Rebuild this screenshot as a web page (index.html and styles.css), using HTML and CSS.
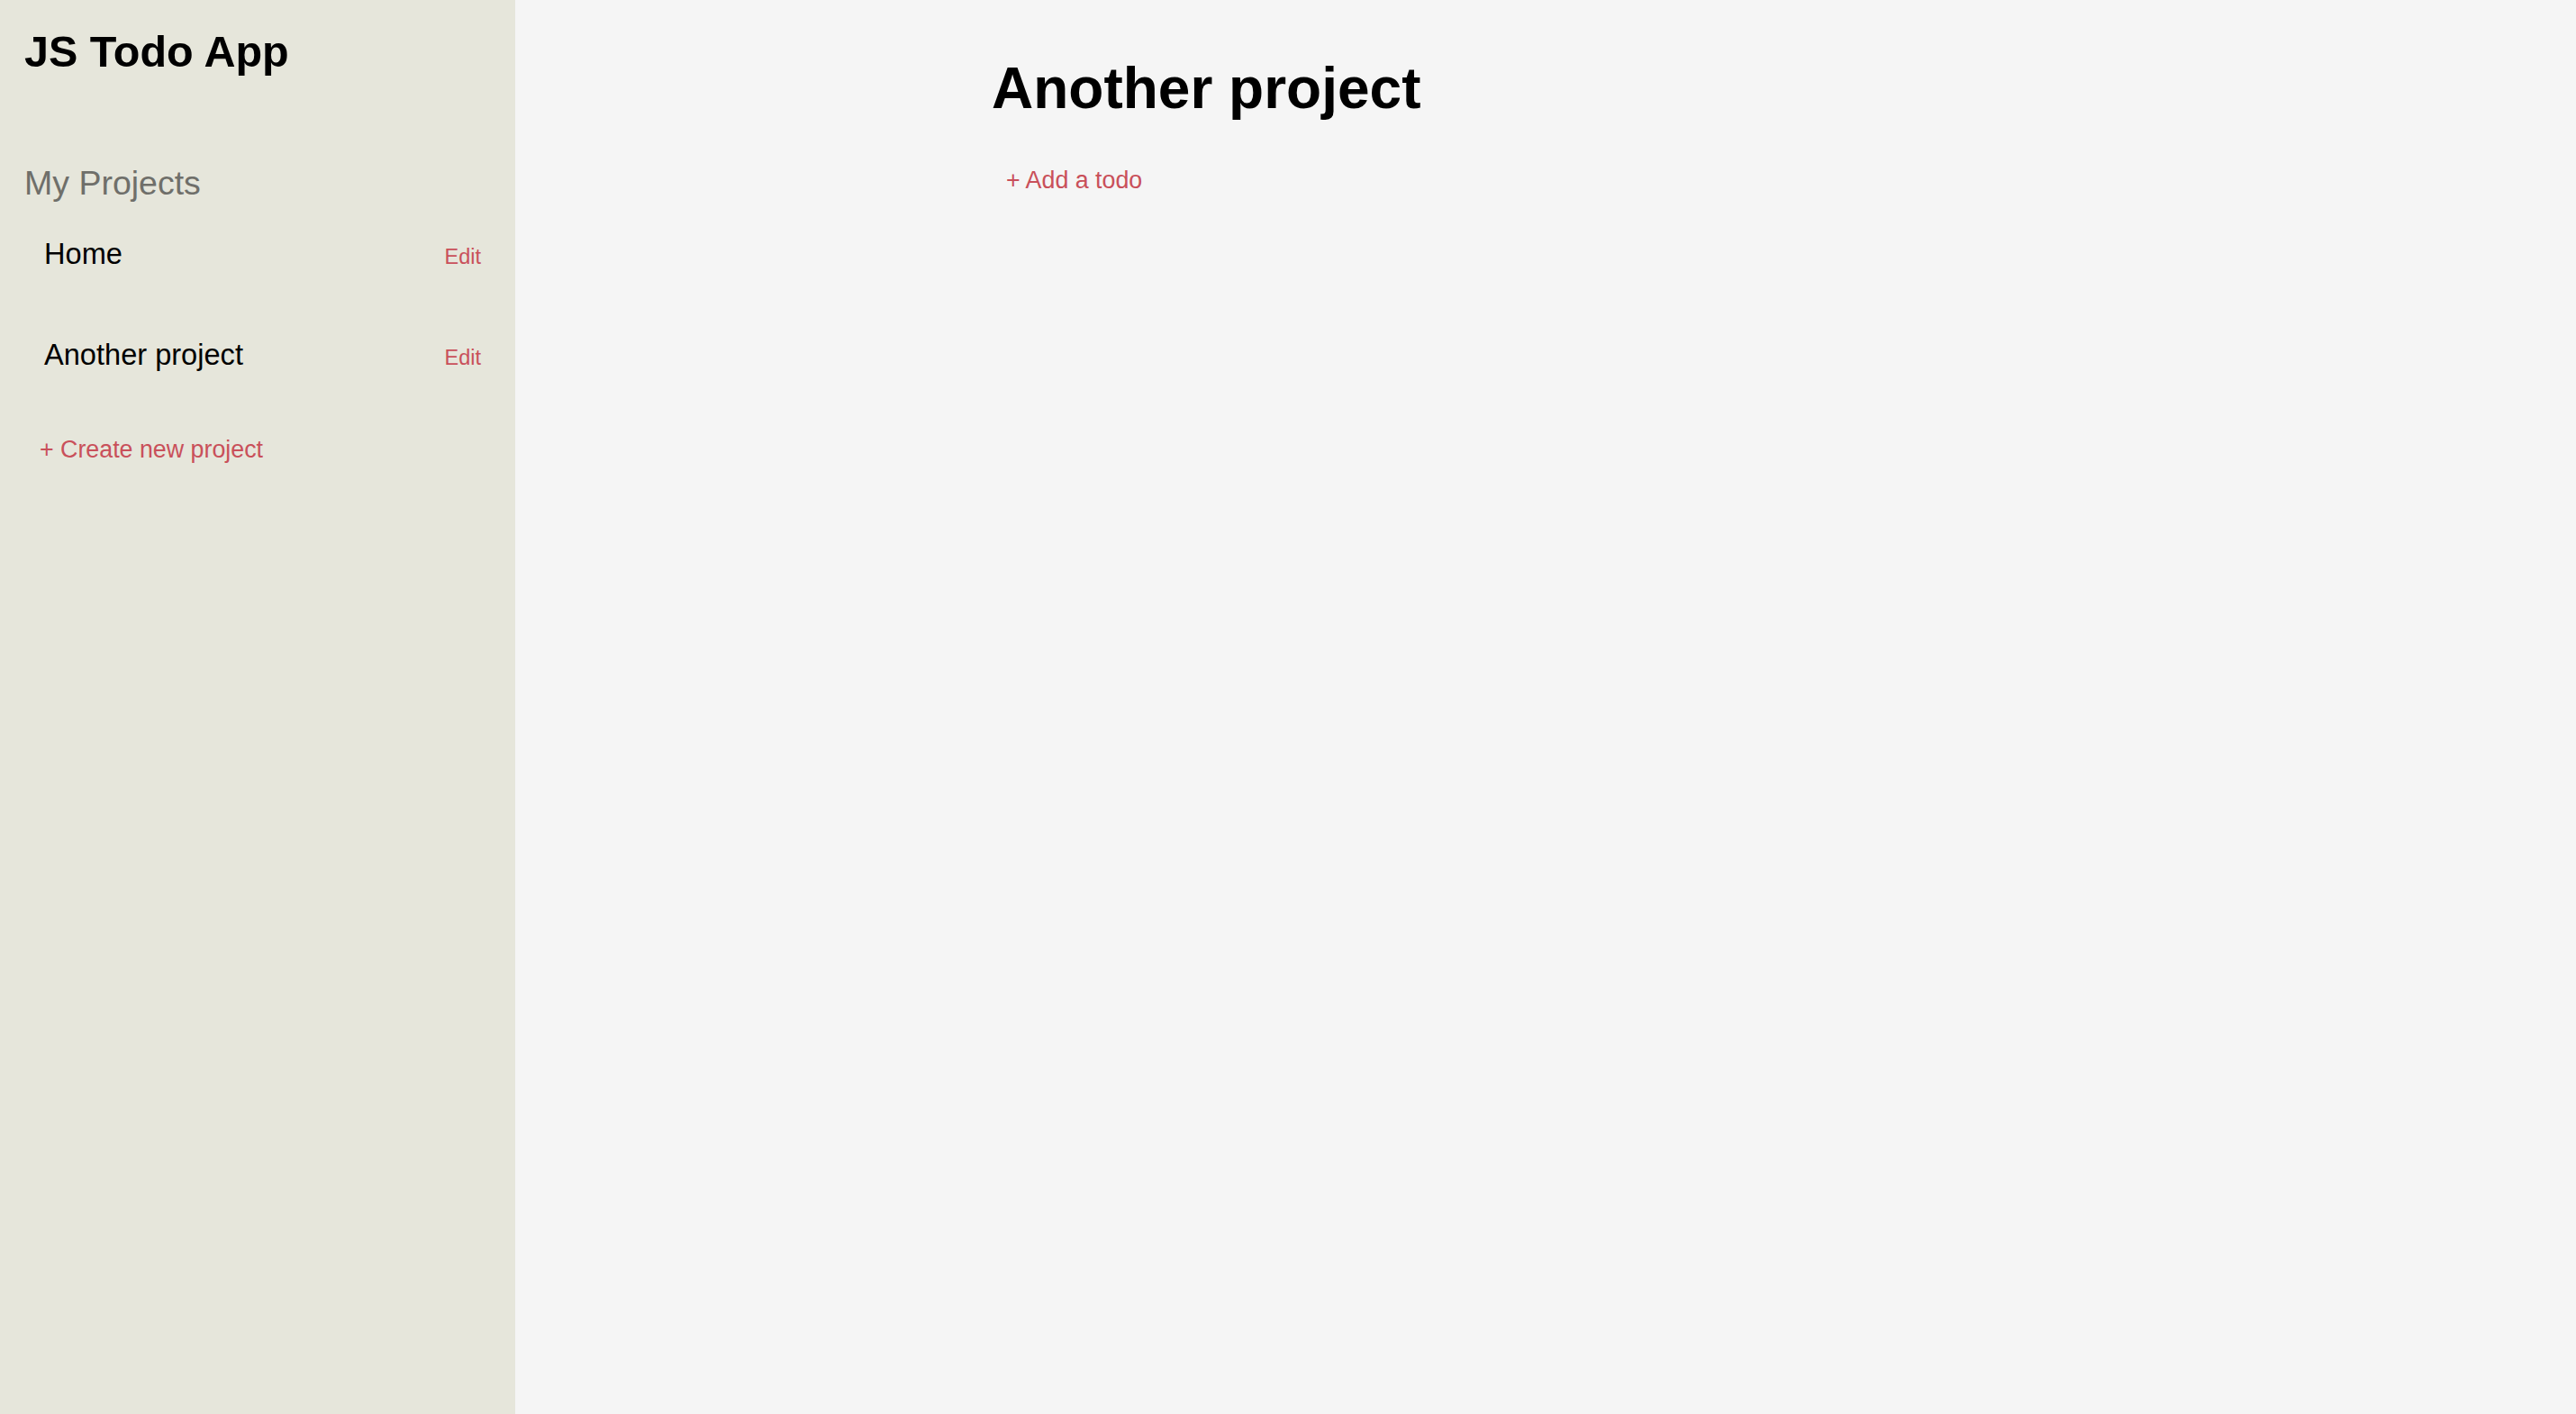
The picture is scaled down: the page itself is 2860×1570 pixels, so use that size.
FILE: index.html
```html
<!DOCTYPE html>
<html lang="en">
<head>
<meta charset="utf-8">
<title>JS Todo App</title>
<link rel="stylesheet" href="styles.css">
</head>
<body>
<div class="app">
  <aside class="sidebar">
    <h1 class="app-title">JS Todo App</h1>
    <h2 class="section-title">My Projects</h2>
    <ul class="project-list">
      <li class="project-row">
        <span class="project-name">Home</span>
        <a class="edit-link" href="#">Edit</a>
      </li>
      <li class="project-row">
        <span class="project-name">Another project</span>
        <a class="edit-link" href="#">Edit</a>
      </li>
    </ul>
    <a class="create-link" href="#">+ Create new project</a>
  </aside>
  <main class="main">
    <h1 class="project-title">Another project</h1>
    <a class="add-link" href="#">+ Add a todo</a>
  </main>
</div>
</body>
</html>
```

FILE: styles.css
```css
* {
  box-sizing: border-box;
}

html, body {
  margin: 0;
  padding: 0;
  height: 100%;
}

body {
  font-family: "Liberation Sans", Arial, Helvetica, sans-serif;
  color: #000;
  background: #f5f5f5;
}

.app {
  display: flex;
  height: 100vh;
}

.sidebar {
  width: 572px;
  flex: 0 0 572px;
  background: #e6e6db;
  padding: 34px 38px 0 27px;
  display: flex;
  flex-direction: column;
}

.app-title {
  margin: 0;
  font-size: 48.5px;
  line-height: 46px;
  font-weight: bold;
}

.section-title {
  margin: 105px 0 0 0;
  font-size: 37.5px;
  line-height: 36px;
  font-weight: normal;
  color: #6f6f6a;
}

.project-list {
  list-style: none;
  margin: 45px 0 0 0;
  padding: 0 0 0 22px;
  display: flex;
  flex-direction: column;
  gap: 80px;
}

.project-row {
  display: flex;
  align-items: baseline;
  justify-content: space-between;
  height: 32px;
}

.project-name {
  font-size: 32.6px;
  line-height: 32px;
}

.edit-link {
  font-size: 23.5px;
  line-height: 23px;
  color: #c9505a;
  text-decoration: none;
}

.create-link {
  margin: 76px 0 0 17px;
  font-size: 26.8px;
  line-height: 26px;
  color: #c9505a;
  text-decoration: none;
  align-self: flex-start;
}

.main {
  flex: 1;
  padding: 66px 0 0 529px;
  display: flex;
  flex-direction: column;
  align-items: flex-start;
}

.project-title {
  margin: 0;
  font-size: 64px;
  line-height: 64px;
  font-weight: bold;
}

.add-link {
  margin: 57px 0 0 16px;
  font-size: 26.8px;
  line-height: 26px;
  color: #c9505a;
  text-decoration: none;
}
```
